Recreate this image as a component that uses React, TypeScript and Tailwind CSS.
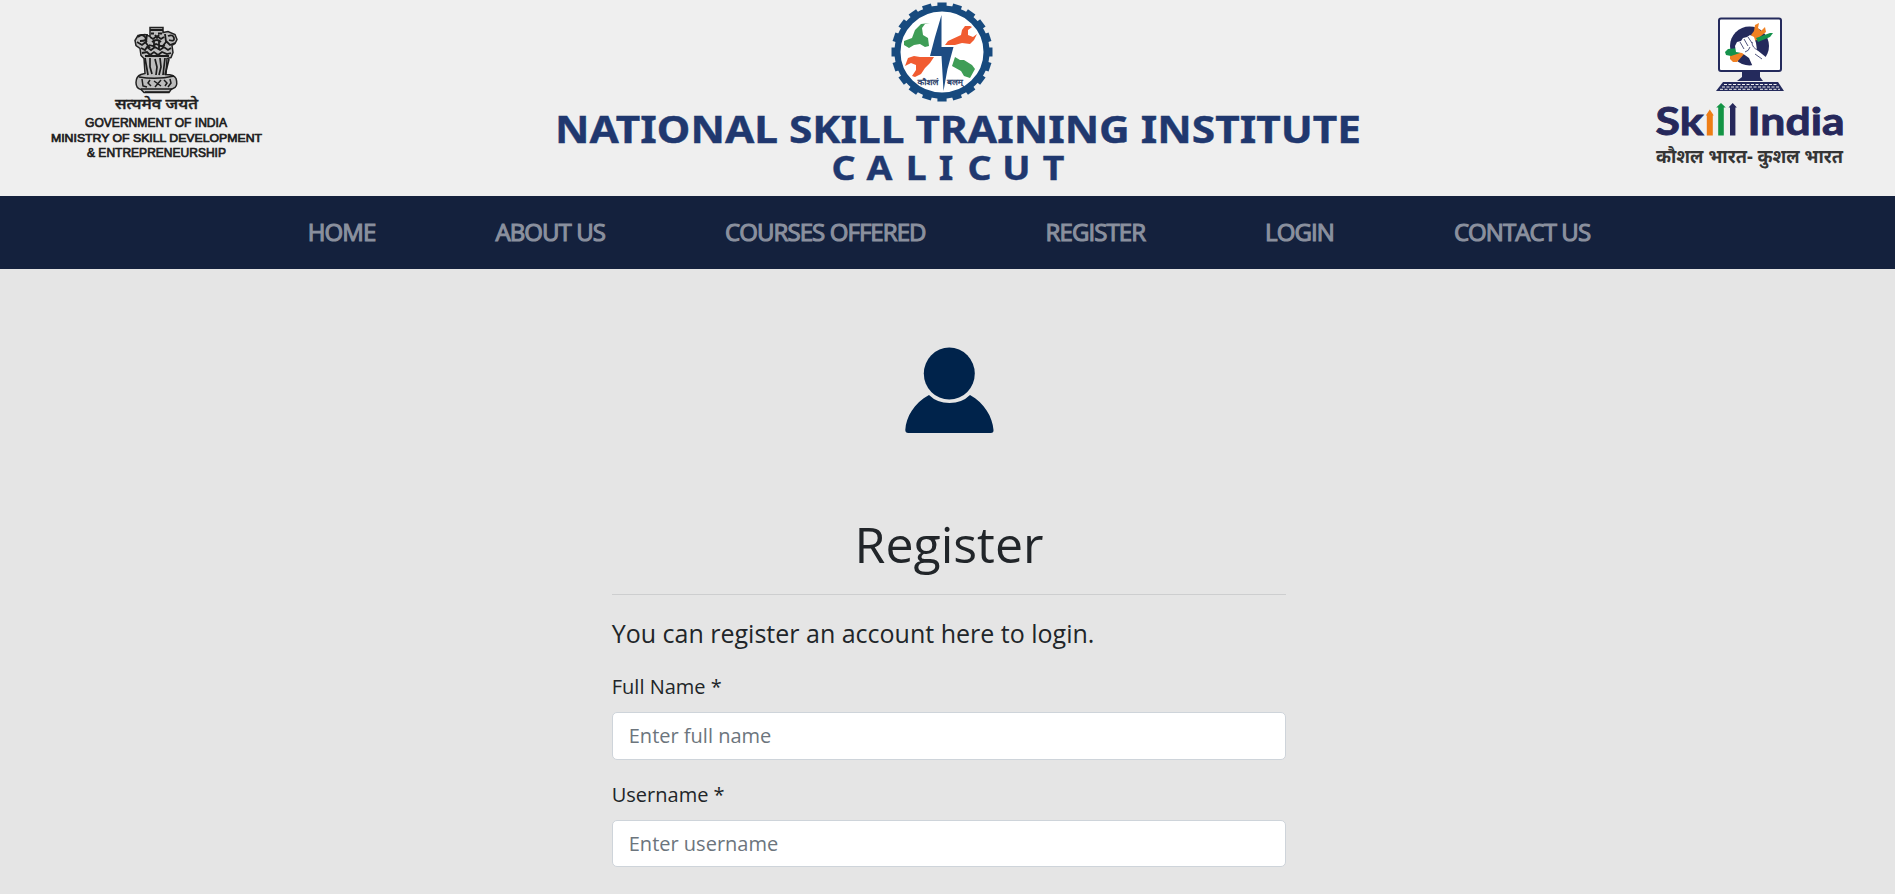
import React from "react";

const NAV = ["HOME", "ABOUT US", "COURSES OFFERED", "REGISTER", "LOGIN", "CONTACT US"];
const FIELDS = [
  { label: "Full Name *", placeholder: "Enter full name" },
  { label: "Username *", placeholder: "Enter username" },
];

function MinistryLogo() {
  return (
    <svg width="260" height="170" viewBox="30 10 260 170" className="block font-['Liberation_Sans',sans-serif]">
      <path d="M150 27.500h13v5l5-1 7 3 2 5-2 4-3 2 1 7-2 5-4 1-1 16q8 0 10 4q2 6-1 9l-4 2-2 3h-25l-3-3q-5-1-5-7q0-6 5-8l4-1-1-15-3-3-1-7-4-3-1-5 3-5 7-1 5 2z" fill="#bdbdbd" stroke="#222" strokeWidth="1.500" />
      <g fill="none" stroke="#1c1c1c" strokeWidth="1.800">
        <path d="M150 30h13M151 33.500h3M158 33.500h4M150 37l3 2 4-3 4 3 3-2M152 42q5-4 9 0M138 37q4-4 7 0t-5 4M168 36q5-2 6 2t-5 2M137 42l5 3 5-4M166 41l4 4 5-2M147 34l-1 9 4 5M165 34l1 8-4 5M149 45l4 1 3-2 5 2 4-1M141 48l4 2 2-3 4 3 4-3 5 3 4-3 4 3 3-2M142 53l5-1 3 3 4-3 4 3 4-3 5 2 4-1M145 56h24M155 35l2 3 2-3M154 40v8M159 40v9" />
        <path d="M145 58l3 17M150 58v9l2 7M155 59l2 8-1 8M160 58l1 9-2 8M165 58l-2 17M169 59l-4 16" strokeWidth="1.700" />
        <path d="M139 77q18 3 35-1M142 79l1 7 4 1M150 80l-2 3 3 3M154 81l7 5M161 80l-6 7M164 80l3 3-2 3M170 79l1 4-3 4M141 89h31M145 92h24" strokeWidth="1.500" />
      </g>
      <g fill="#1e1e1e" stroke="#1e1e1e" strokeWidth="0.7">
        <text x="115" y="109" textLength="83" lengthAdjust="spacingAndGlyphs" fontSize="13.500" strokeWidth="0.4" className="font-['Noto_Sans',sans-serif] font-medium">सत्यमेव जयते</text>
        <text x="85" y="126.500" textLength="142" lengthAdjust="spacingAndGlyphs" fontSize="12.500">GOVERNMENT OF INDIA</text>
        <text x="51" y="142" textLength="211" lengthAdjust="spacingAndGlyphs" fontSize="11.500">MINISTRY OF SKILL DEVELOPMENT</text>
        <text x="87" y="157" textLength="139" lengthAdjust="spacingAndGlyphs" fontSize="12.500">&amp; ENTREPRENEURSHIP</text>
      </g>
    </svg>
  );
}

const TEETH = Array.from({ length: 20 }, (_, i) => i * 18);

function InstituteLogo() {
  return (
    <svg width="820" height="190" viewBox="548 0 820 190" className="block font-['Noto_Sans',sans-serif]">
      <g fill="#174a7e">
        {TEETH.map((a) => (
          <rect key={a} x="937.500" y="2" width="9" height="8" transform={`translate(942 52) scale(1.02 1) rotate(${a}) translate(-942 -51.5)`} />
        ))}
      </g>
      <ellipse cx="942" cy="52" rx="44.500" ry="43.500" fill="#fff" stroke="#174a7e" strokeWidth="6" />
      <path d="M930 23l-5 1-3 4 1 7 5 3 1 8-4 1-5-3-6 1-5 3-5-3 0-4 8-3 3-8 6-6z" fill="#3f9d56" />
      <path d="M965 26l5 0 2 1-4 3 0 5 5 2 4-3-3 6-4 4-8-1-7 2-10 0 3-4 13-6 1-5z" fill="#f15c31" />
      <path d="M905 66l3-8 6-2 6 1h14l-4 6-5 5-4 6-6 3-3-1 4-6 0-5-5-2z" fill="#f15c31" />
      <path d="M955 57l5 3 4 0 8 5 3 4-5 9-6-2-3-5-9-5z" fill="#3f9d56" />
      <path d="M941.500 15v32h12l-6 22-4 22-2-35h-11.500l5-19z" fill="#1d4c83" />
      <g fill="#1f3864" stroke="#1f3864" strokeWidth="0.3" fontSize="8.500">
        <text x="917.500" y="84.500" textLength="21" lengthAdjust="spacingAndGlyphs">कौशलं</text>
        <text x="947" y="84.500" textLength="16" lengthAdjust="spacingAndGlyphs">बलम्</text>
      </g>
      <g fill="#20386f" fontWeight="700">
        <text x="555" y="143" textLength="806" lengthAdjust="spacingAndGlyphs" fontSize="37.800" stroke="#20386f" strokeWidth="0.4">NATIONAL SKILL TRAINING INSTITUTE</text>
        <text transform="scale(1.1 1)" x="766.8 799.5 832.9 860 890.5 924.1 957.7" y="180.500" textAnchor="middle" fontSize="34" stroke="#20386f" strokeWidth="0.4">CALICUT</text>
      </g>
    </svg>
  );
}

function SkillIndiaLogo() {
  return (
    <svg width="230" height="180" viewBox="1640 0 230 180" className="block">
      <rect x="1719" y="18.500" width="62" height="52.500" rx="2" fill="#fff" stroke="#242a5c" strokeWidth="2" />
      <path d="M1742 71h18v6l3 4h-26l5-4z" fill="#242a5c" />
      <path d="M1723 82h55l6 9h-68z" fill="#242a5c" />
      <path d="M1724 84.500h53M1722 87h57M1720 89.300h33M1760 89.300h20" stroke="#efefef" strokeWidth="1" strokeDasharray="3 1.500" fill="none" />
      <circle cx="1749.500" cy="46" r="19.500" fill="#242a5c" />
      <path d="M1730 56l9-8 6 5-8 9-4 0-3-3z" fill="#f08123" />
      <path d="M1725 52l3-3 10-1 2 5-9 3-5-1z" fill="#15924c" />
      <path d="M1751 35l3-4 1-6 4-2-1 5 3 3 4-4 1 5-5 4-4 4-3 1z" fill="#f08123" />
      <path d="M1756 38l14-5 3 0-3 4-12 5z" fill="#15924c" />
      <path d="M1735 46l2-4 4-1 2-3 4-1 3-2 4 2 2 6 1 7 10 8-3 6-11 3-4-9-7-5-6-1z" fill="#fff" />
      <path d="M1740 42l4 7M1744 39l4 7M1748 37l4 6M1752 42q0 6 6 8M1745 52q4-1 5-5M1755 54l7 5" stroke="#242a5c" strokeWidth="0.8" fill="none" />
      <g fill="#26285b" stroke="#26285b" strokeWidth="0.9" fontFamily="Lato, sans-serif" fontWeight="700">
        <text x="1655.500" y="135" textLength="48" lengthAdjust="spacingAndGlyphs" fontSize="38.500">Sk</text>
        <text x="1747.500" y="135" textLength="97" lengthAdjust="spacingAndGlyphs" fontSize="38.500">India</text>
      </g>
      <path d="M1706.800 135.500v-20h-1l4-6 4 6h-1v20z" fill="#ee7d14" />
      <path d="M1718.200 135.500v-28h-2l4.800-4.500 4.800 4.500h-2v28z" fill="#139445" />
      <path d="M1730 135.500v-28h-1.500l4.200-4.500 4.200 4.500h-1.500v28z" fill="#26285b" />
      <text x="1656" y="163" textLength="187" lengthAdjust="spacingAndGlyphs" fontSize="19" fill="#353535" className="font-['Noto_Sans',sans-serif] font-bold">कौशल भारत- कुशल भारत</text>
    </svg>
  );
}

function UserIcon() {
  return (
    <svg width="90" height="86" viewBox="904 347 90 86" className="block">
      <ellipse cx="949.300" cy="373.600" rx="25.500" ry="26" fill="#00234b" />
      <path d="M929 395c-15 8-23 22-23.700 35q0 3 3 3h82.500q3 0 2.700-3c-1-13-9-27-23.500-35q-8 8-20.500 8t-20.500-8z" fill="#00234b" />
    </svg>
  );
}

export default function App() {
  return (
    <div className="h-[894px] w-full overflow-hidden bg-[#e5e5e5] font-['Open_Sans',sans-serif] text-[#212529]">
      <div className="w-[1898px]">
        <header className="flex h-[196px] items-start bg-[#efefef]">
          <div className="pt-[10px] pl-[30px]"><MinistryLogo /></div>
          <div className="ml-[258px]"><InstituteLogo /></div>
          <div className="ml-[272px]"><SkillIndiaLogo /></div>
        </header>
        <nav className="flex h-[73px] items-center justify-center gap-[120px] bg-[#14213d] pb-px">
          {NAV.map((n) => (
            <a key={n} href="#" className="text-[24px] tracking-[-0.92px] whitespace-nowrap text-[#8a909e] [-webkit-text-stroke:1.1px_#8a909e]">{n}</a>
          ))}
        </nav>
        <main className="mx-auto w-[674.5px]">
          <div className="flex justify-center pt-[78px]"><UserIcon /></div>
          <h1 className="mt-[80.5px] text-center text-[50px] leading-[60px]">Register</h1>
          <hr className="mt-5 mb-5 border-[#cdcecf]" />
          <p className="mb-5 text-[25px] leading-[37.5px]">You can register an account here to login.</p>
          <form>
            {FIELDS.map((f) => (
              <div key={f.label} className="mb-5">
                <label className="mb-2.5 block text-[20px] leading-[30px]">{f.label}</label>
                <input placeholder={f.placeholder} className="block h-[47.5px] w-full rounded-[5px] border border-[#ced4da] bg-white px-4 text-[20px] placeholder:text-[#6c757d]" />
              </div>
            ))}
          </form>
        </main>
      </div>
    </div>
  );
}
